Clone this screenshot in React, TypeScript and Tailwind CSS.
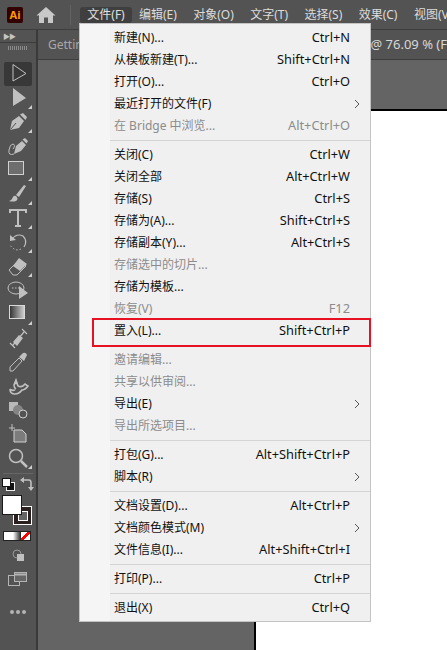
import type { ReactNode } from "react";

type MenuRow = {
  label: string;
  shortcut?: string;
  disabled?: boolean;
  submenu?: boolean;
  boxed?: boolean;
  sep?: boolean;
};

const topMenus = ["编辑(E)", "对象(O)", "文字(T)", "选择(S)", "效果(C)", "视图(V)"];

const fileMenu: MenuRow[] = [
  { label: "新建(N)...", shortcut: "Ctrl+N" },
  { label: "从模板新建(T)...", shortcut: "Shift+Ctrl+N" },
  { label: "打开(O)...", shortcut: "Ctrl+O" },
  { label: "最近打开的文件(F)", submenu: true },
  { label: "在 Bridge 中浏览...", shortcut: "Alt+Ctrl+O", disabled: true, sep: true },
  { label: "关闭(C)", shortcut: "Ctrl+W" },
  { label: "关闭全部", shortcut: "Alt+Ctrl+W" },
  { label: "存储(S)", shortcut: "Ctrl+S" },
  { label: "存储为(A)...", shortcut: "Shift+Ctrl+S" },
  { label: "存储副本(Y)...", shortcut: "Alt+Ctrl+S" },
  { label: "存储选中的切片...", disabled: true },
  { label: "存储为模板..." },
  { label: "恢复(V)", shortcut: "F12", disabled: true },
  { label: "置入(L)...", shortcut: "Shift+Ctrl+P", boxed: true, sep: true },
  { label: "邀请编辑...", disabled: true },
  { label: "共享以供审阅...", disabled: true },
  { label: "导出(E)", submenu: true },
  { label: "导出所选项目...", disabled: true, sep: true },
  { label: "打包(G)...", shortcut: "Alt+Shift+Ctrl+P" },
  { label: "脚本(R)", submenu: true, sep: true },
  { label: "文档设置(D)...", shortcut: "Alt+Ctrl+P" },
  { label: "文档颜色模式(M)", submenu: true },
  { label: "文件信息(I)...", shortcut: "Alt+Shift+Ctrl+I", sep: true },
  { label: "打印(P)...", shortcut: "Ctrl+P", sep: true },
  { label: "退出(X)", shortcut: "Ctrl+Q" },
];

const Tool = ({ children, flag, active }: { children: ReactNode; flag?: boolean; active?: boolean }) => (
  <div className={`relative flex h-[24px] w-[28px] items-center justify-center rounded-[2px] ${active ? "bg-[#383838]" : ""}`}>
    <svg width="22" height="22" viewBox="0 0 22 22" className="text-[#c0c0c0]">
      {children}
    </svg>
    {flag && <span className="absolute bottom-[1px] right-0 h-0 w-0 border-b-[4px] border-l-[4px] border-b-[#d0d0d0] border-l-transparent" />}
  </div>
);

const ToolPanel = () => (
  <aside className="flex w-[36px] shrink-0 flex-col items-center bg-[#535353]">
    <div className="flex h-[13px] w-full items-center border-b border-[#3c3c3c] pl-[3px]">
      <span className="text-[7px] leading-none tracking-[-1px] text-[#c4c4c4]">▶▶</span>
    </div>
    <div className="mt-[3px] h-[4px] w-[20px] bg-[repeating-linear-gradient(90deg,#8a8a8a_0,#8a8a8a_1px,transparent_1px,transparent_2px)]" />
    <div className="mt-[12px] flex flex-col items-center">
      <Tool active>
        <path d="M6 1.5 V18 L19 10.5 Z" fill="none" stroke="currentColor" strokeWidth="1" />
      </Tool>
      <Tool flag>
        <path d="M6 1 V19 L19 11 Z" fill="currentColor" />
      </Tool>
      <Tool flag>
        <path d="M3 19 L5 10 L12 5 L17 10 L12 17 Z" fill="currentColor" />
        <path d="M13 3.5 L16 2 L20 6 L18.5 9 Z" fill="currentColor" />
        <path d="M3.5 18.5 L9 12" stroke="#535353" />
      </Tool>
      <Tool>
        <path d="M7 19 L9 11 L15 6 L19 10 L14 16 Z" fill="currentColor" />
        <path d="M15.5 4.5 L18 3 L21 6 L19.5 8.5 Z" fill="currentColor" />
        <path d="M7 19 Q1 21 2 15 Q3 9 6 9 Q9 10 6 14" fill="none" stroke="currentColor" />
      </Tool>
      <Tool flag>
        <rect x="1.5" y="2.5" width="15" height="13" fill="#6e6e6e" stroke="#d0d0d0" />
      </Tool>
      <Tool flag>
        <path d="M9 12 L17 2 L19 3 L12 14 Z" fill="currentColor" />
        <path d="M9 13 Q12 16 9 18 Q6 19 2 18 Q5 17 6 14 Q7 12 9 13Z" fill="currentColor" />
      </Tool>
      <Tool flag>
        <path d="M3 6 V3 H19 V6 M11 3 V19 M8 19 H14" fill="none" stroke="currentColor" strokeWidth="2" />
      </Tool>
      <Tool flag>
        <path d="M5 8 Q10 2 16 5 Q21 10 17 16" fill="none" stroke="currentColor" strokeWidth="1.2" />
        <path d="M3 4 L3 10 L9 9 Z" fill="currentColor" />
        <path d="M14 18 Q8 21 3 14" fill="none" stroke="currentColor" strokeDasharray="1.5 2" />
      </Tool>
      <Tool flag>
        <path d="M2 15 L12 5 L19 11 L10 20 H6 Z" fill="none" stroke="currentColor" />
        <path d="M6 11 L12 3 L20 9 L13 16 Z" fill="currentColor" />
      </Tool>
      <Tool>
        <ellipse cx="9" cy="9" rx="8" ry="6" fill="none" stroke="currentColor" />
        <path d="M5 9 H12" stroke="currentColor" strokeDasharray="1.5 1.5" />
        <path d="M12 7 V20 L21 14 Z" fill="currentColor" />
      </Tool>
      <Tool flag>
        <defs>
          <linearGradient id="grad">
            <stop offset="0" stopColor="#2f2f2f" />
            <stop offset="1" stopColor="#d4d4d4" />
          </linearGradient>
        </defs>
        <rect x="2.5" y="2.5" width="15" height="13" fill="url(#grad)" stroke="#d8d8d8" />
      </Tool>
      <Tool>
        <path d="M3 16 L8 21 M15 2 L20 7 M6 18 L17 5" stroke="currentColor" strokeWidth="1.2" />
        <path d="M6 15 L10 19 L16 11 L12 8 Z" fill="currentColor" />
      </Tool>
      <Tool>
        <path d="M3 20 L3 16 L12 7 L15 10 L6 20 Z" fill="none" stroke="currentColor" />
        <path d="M12 6 L16 2 Q19 1 20 4 L17 10 Z" fill="currentColor" />
      </Tool>
      <Tool>
        <path d="M3 14 Q3 19 8 19 Q12 19 15 15 Q18 15 21 11 L18 9 Q15 13 11 11 L9 5 L7 10 Q7 13 9 14 M3 14 Q5 16 8 15" fill="none" stroke="currentColor" strokeWidth="1.6" />
        <circle cx="9" cy="8" r="1.4" fill="currentColor" />
      </Tool>
      <Tool>
        <rect x="2" y="3" width="9" height="9" fill="#b9b9b9" />
        <circle cx="11" cy="11" r="5" fill="#858585" />
        <circle cx="16" cy="15" r="4" fill="#535353" stroke="#d0d0d0" />
      </Tool>
      <Tool>
        <path d="M2 5 H8 M5 1 V8" stroke="currentColor" />
        <path d="M7 7 H15 L19 11 V19 H7 Z" fill="#7c7c7c" stroke="#d0d0d0" />
      </Tool>
      <Tool flag>
        <circle cx="9" cy="9" r="6.5" fill="none" stroke="currentColor" strokeWidth="1.5" />
        <path d="M14 14 L20 20" stroke="currentColor" strokeWidth="2.5" />
      </Tool>
    </div>
    <div className="mt-[3px] h-px w-[30px] bg-[#666666]" />
    <div className="mt-[3px] flex h-[14px] w-full items-center justify-between pl-[2px] pr-[2px]">
      <svg width="13" height="13" viewBox="0 0 13 13">
        <rect x="4.5" y="4.5" width="8" height="8" fill="#111" stroke="#eee" />
        <rect x="0.5" y="0.5" width="8" height="8" fill="#fff" stroke="#111" />
      </svg>
      <svg width="14" height="14" viewBox="0 0 14 14" className="text-[#c0c0c0]">
        <path d="M4 3 H9 Q11 3 11 6 V10" fill="none" stroke="currentColor" strokeWidth="1.6" />
        <path d="M4 0 V6 L0 3 Z M8 10 H14 L11 14 Z" fill="currentColor" />
      </svg>
    </div>
    <div className="relative mt-[4px] h-[30px] w-[32px] self-start">
      <div className="absolute left-[13px] top-[11px] flex h-[19px] w-[19px] items-center justify-center border border-white bg-[#2a2020]">
        <div className="h-[10px] w-[10px] border border-white bg-[#666666]" />
      </div>
      <div className="absolute left-[2px] top-0 h-[20px] w-[20px] border border-[#1a1a1a] bg-white" />
    </div>
    <div className="mt-[6px] flex h-[10px] w-[28px] -translate-x-px border border-[#222222]">
      <div className="h-full flex-1 bg-white" />
      <div className="h-full flex-1 bg-[linear-gradient(90deg,#fff,#222)]" />
      <div className="h-full flex-1 bg-[linear-gradient(135deg,#fff_38%,#f00_38%,#f00_62%,#fff_62%)]" />
    </div>
    <div className="mt-[5px] flex h-[18px] items-center justify-center">
      <svg width="12" height="12" viewBox="0 0 12 12">
        <circle cx="5" cy="5" r="4" fill="none" stroke="#9a9a9a" />
        <rect x="5" y="5" width="7" height="7" fill="#c0c0c0" />
      </svg>
    </div>
    <div className="mt-[6px] flex h-[18px] items-center justify-center">
      <svg width="20" height="14" viewBox="0 0 20 14">
        <rect x="0.5" y="3.5" width="11" height="10" fill="none" stroke="#b4b4b4" />
        <rect x="6.5" y="0.5" width="12" height="9" fill="#666" stroke="#b4b4b4" />
        <path d="M6.5 2.5 H18.5" stroke="#b4b4b4" strokeWidth="2" />
      </svg>
    </div>
    <div className="mt-[22px] flex gap-[2px]">
      <span className="h-[4px] w-[4px] rounded-full bg-[#b4b4b4]" />
      <span className="h-[4px] w-[4px] rounded-full bg-[#b4b4b4]" />
      <span className="h-[4px] w-[4px] rounded-full bg-[#b4b4b4]" />
    </div>
  </aside>
);

const FileMenu = () => (
  <div className="absolute left-[79px] top-[23px] z-10 h-[599px] w-[292px] border border-[#c4c4c4] bg-[linear-gradient(90deg,#f5f5f5_30px,#f0f0f0_30px)] pt-[3px] font-['Noto_Sans','Noto_Sans_CJK_SC',sans-serif] text-[12px]">
    {fileMenu.map((row) => (
      <div key={row.label}>
        <div className={`relative flex h-[22px] items-center pl-[34px] pr-[20px] ${row.disabled ? "text-[#8c8c8c]" : "text-[#111111]"}`}>
          <span>{row.label}</span>
          {row.shortcut && <span className="ml-auto text-[12.8px]">{row.shortcut}</span>}
          {row.submenu && (
            <svg width="6" height="10" viewBox="0 0 6 10" className="absolute right-[10px] text-[#555555]">
              <path d="M1 1 L5 5 L1 9" fill="none" stroke="currentColor" />
            </svg>
          )}
          {row.boxed && <div className="absolute -bottom-[5px] -right-[1px] -top-[2px] left-[12px] border-2 border-[#e81123]" />}
        </div>
        {row.sep && (
          <div className="flex h-[7px] items-center pl-[30px]">
            <div className="h-px w-full bg-[#d4d4d4]" />
          </div>
        )}
      </div>
    ))}
  </div>
);

export default function App() {
  return (
    <div className="relative flex h-[650px] w-[447px] flex-col overflow-hidden bg-[#535353] font-['Noto_Sans','Noto_Sans_CJK_SC',sans-serif] text-[12px]">
      <header className="flex h-[30px] shrink-0 items-center border-b border-[#3e3e3e] pl-[7px]">
        <div className="flex h-[16px] w-[16px] shrink-0 items-center justify-center rounded-[2px] bg-[#330000] text-[11px] font-bold leading-none text-[#ff9a00]">
          Ai
        </div>
        <svg width="20" height="18" viewBox="0 0 20 18" className="ml-[13px] shrink-0 text-[#c8c8c8]">
          <path d="M10 1 L0.5 9.5 H3 V17 H8 V11.5 H12 V17 H17 V9.5 H19.5 Z" fill="currentColor" />
        </svg>
        <div className="ml-[14px] h-[20px] w-px shrink-0 bg-[#616161]" />
        <div className="ml-[9px] flex h-[16px] w-[52px] shrink-0 items-center justify-center rounded-[3px] bg-[#3f3f3f] text-[#e0e0e0]">
          文件(F)
        </div>
        <nav className="ml-[7px] flex shrink-0 gap-[16.4px] whitespace-nowrap text-[#dcdcdc]">
          {topMenus.map((m) => (
            <span key={m}>{m}</span>
          ))}
        </nav>
      </header>
      <div className="flex min-h-0 flex-1">
        <ToolPanel />
        <div className="w-[2px] shrink-0 bg-[#3a3a3a]" />
        <main className="flex min-w-0 flex-1 flex-col bg-[#646464]">
          <div className="flex h-[30px] shrink-0 items-center justify-between whitespace-nowrap border-b border-[#3e3e3e] bg-[#535353] pl-[10px] text-[#a8a8a8]">
            <span>Getting</span>
            <span className="text-[13px] text-[#d8d8d8]">@ 76.09 % (F</span>
          </div>
          <div className="flex-1 pl-[216px] pt-[49px]">
            <div className="h-full border-l-2 border-t-2 border-black bg-white" />
          </div>
        </main>
      </div>
      <FileMenu />
    </div>
  );
}
